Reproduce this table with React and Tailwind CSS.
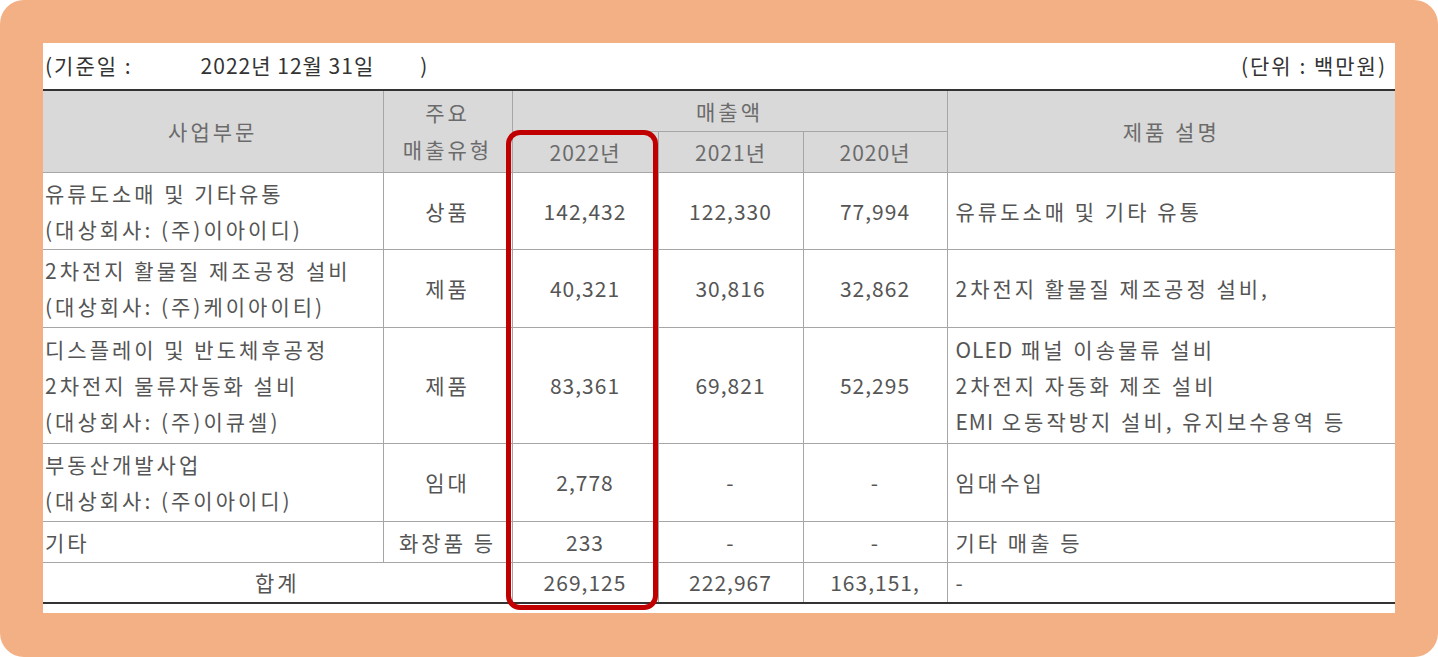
import React from 'react';

const ROWS = [
  {
    seg: ['유류도소매 및 기타유통', '(대상회사: (주)이아이디)'],
    type: '상품',
    v: ['142,432', '122,330', '77,994'],
    desc: ['유류도소매 및 기타 유통'],
    h: 'h-[77px]',
  },
  {
    seg: ['2차전지 활물질 제조공정 설비', '(대상회사: (주)케이아이티)'],
    type: '제품',
    v: ['40,321', '30,816', '32,862'],
    desc: ['2차전지 활물질 제조공정 설비,'],
    h: 'h-[78px]',
  },
  {
    seg: ['디스플레이 및 반도체후공정', '2차전지 물류자동화 설비', '(대상회사: (주)이큐셀)'],
    type: '제품',
    v: ['83,361', '69,821', '52,295'],
    desc: ['OLED 패널 이송물류 설비', '2차전지 자동화 제조 설비', 'EMI 오동작방지 설비, 유지보수용역 등'],
    h: 'h-[116px]',
  },
  {
    seg: ['부동산개발사업', '(대상회사: (주이아이디)'],
    type: '임대',
    v: ['2,778', '-', '-'],
    desc: ['임대수입'],
    h: 'h-[78px]',
  },
  {
    seg: ['기타'],
    type: '화장품 등',
    v: ['233', '-', '-'],
    desc: ['기타 매출 등'],
    h: 'h-[41px]',
  },
];

const cell = 'border border-[#a6a6a6] p-0';
const num = 'text-center tracking-[1px]';

// latin words (OLED, EMI) in the reference font are not spread out like the hangul
function Desc({ text }) {
  const m = text.match(/^([A-Z]+)( .*)$/);
  if (!m) return <div>{text}</div>;
  return (
    <div>
      <span className="tracking-[1px]">{m[1]}</span>
      {m[2]}
    </div>
  );
}

export default function App() {
  return (
    <div className="w-[1438px] h-[657px] bg-white font-['Noto_Sans_CJK_KR',sans-serif] text-[#555]">
      <div className="h-full rounded-[24px] bg-[#f3b084] pt-[43px] pl-[43px]">
        <div className="w-[1352px] h-[570px] bg-white">
          <div className="h-[46px] flex items-center px-[2px] text-[21px] text-[#333] tracking-[2px] whitespace-nowrap">
            <span>(기준일 :</span>
            <span className="ml-[68px] tracking-[1px]">2022년 12월 31일</span>
            <span className="ml-[46px]">)</span>
            <span className="ml-auto mr-[6px]">(단위 : 백만원)</span>
          </div>
          <div className="relative">
            <table className="w-[1352px] table-fixed border-collapse text-[21px] leading-[36px] tracking-[3px]">
              <colgroup>
                <col className="w-[340px]" />
                <col className="w-[129px]" />
                <col className="w-[146px]" />
                <col className="w-[145px]" />
                <col className="w-[144px]" />
                <col className="w-[448px]" />
              </colgroup>
              <thead className="bg-[#d9d9d9] text-[#6b6b6b]">
                <tr className="h-[41px] border-t-2 border-t-[#333]">
                  <th rowSpan={2} className={`${cell} border-l-0 font-normal`}>사업부문</th>
                  <th rowSpan={2} className={`${cell} font-normal leading-[37px]`}>
                    주요
                    <br />
                    매출유형
                  </th>
                  <th colSpan={3} className={`${cell} font-normal`}>매출액</th>
                  <th rowSpan={2} className={`${cell} border-r-0 font-normal`}>제품 설명</th>
                </tr>
                <tr className="h-[41px]">
                  <th className={`${cell} ${num} font-normal`}>2022년</th>
                  <th className={`${cell} ${num} font-normal`}>2021년</th>
                  <th className={`${cell} ${num} font-normal`}>2020년</th>
                </tr>
              </thead>
              <tbody>
                {ROWS.map((r, i) => (
                  <tr key={i} className={r.h}>
                    <td className={`${cell} border-l-0 pl-[2px] whitespace-nowrap`}>
                      {r.seg.map((s) => (
                        <div key={s}>{s}</div>
                      ))}
                    </td>
                    <td className={`${cell} text-center whitespace-nowrap`}>{r.type}</td>
                    {r.v.map((v, j) => (
                      <td key={j} className={`${cell} ${num}`}>{v}</td>
                    ))}
                    <td className={`${cell} border-r-0 pl-[8px] whitespace-nowrap`}>
                      {r.desc.map((d) => (
                        <Desc key={d} text={d} />
                      ))}
                    </td>
                  </tr>
                ))}
                <tr className="h-[41px] border-b-2 border-b-[#333]">
                  <td colSpan={2} className={`${cell} border-l-0 text-center`}>합계</td>
                  <td className={`${cell} ${num}`}>269,125</td>
                  <td className={`${cell} ${num}`}>222,967</td>
                  <td className={`${cell} ${num}`}>163,151,</td>
                  <td className={`${cell} border-r-0 pl-[8px]`}>-</td>
                </tr>
              </tbody>
            </table>
            <div className="absolute left-[463px] top-[41px] w-[152px] h-[480px] border-[5px] border-[#c00000] rounded-[14px] pointer-events-none" />
          </div>
        </div>
      </div>
    </div>
  );
}
